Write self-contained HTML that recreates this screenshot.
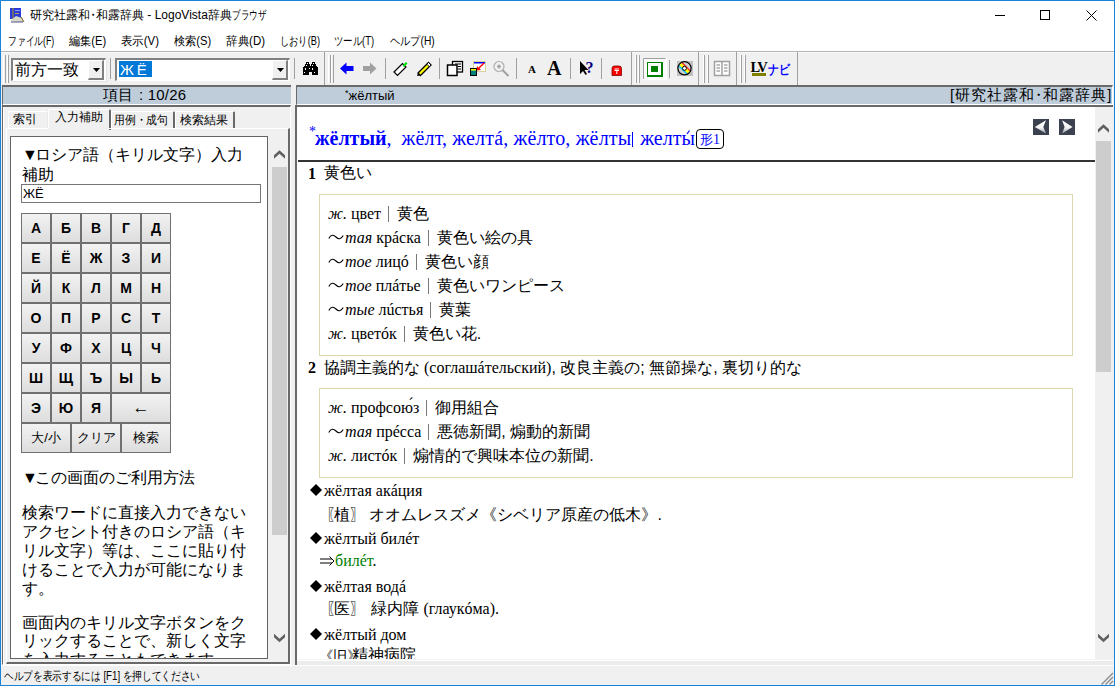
<!DOCTYPE html>
<html><head><meta charset="utf-8">
<style>
*{margin:0;padding:0;box-sizing:border-box}
html,body{width:1115px;height:686px;overflow:hidden;background:#f0f0f0;font-family:"Liberation Sans",sans-serif;color:#000}
.a{position:absolute}
.t{position:absolute;white-space:nowrap;line-height:1}
#rc i{font-style:italic}
#rc j{font-family:"Liberation Sans",sans-serif;font-size:16px}
.bx{border:1px solid #dcd8b0}
.ln div{height:24px;line-height:24px;white-space:nowrap}
.sp{display:inline-block;width:1px;height:16px;background:#787878;vertical-align:-3px;margin:0 8px 0 7px;text-decoration:none}
.k{position:absolute;height:30px;border:1px solid #707070;background:linear-gradient(#f2f2f2,#dddddd);font-size:14px;font-weight:bold;text-align:center;line-height:28px;color:#000}
</style></head><body>
<!-- window border -->
<div class="a" style="left:0;top:0;width:1115px;height:686px;border:1px solid #1883d7;z-index:50;pointer-events:none"></div>
<!-- title bar -->
<div class="a" style="left:0;top:0;width:1115px;height:52px;background:#fff"></div>
<div class="a" style="left:0;top:51px;width:1115px;height:1px;background:#b4b4b4"></div><div class="a" style="left:0;top:52px;width:1115px;height:1px;background:#fafafa"></div>
<div class="t" style="left:30px;top:9px;font-size:12px">研究社露和<span style="margin:0 -3px">・</span>和露辞典 - LogoVista辞典<span style="display:inline-block;transform:scaleX(0.72);transform-origin:0 0;margin-right:-13.4px">ブラウザ</span></div>
<svg class="a" style="left:9px;top:7px" width="16" height="16">
<rect x="1" y="1" width="11" height="11" fill="#2a3ad8"/><rect x="3" y="1" width="2" height="11" fill="#6a6a7a"/><rect x="6" y="3" width="5" height="1" fill="#8aa0ff"/><rect x="6" y="6" width="4" height="1" fill="#c0a040"/>
<path d="M1 14L7 9L13 11L15 15L9 15Z" fill="#d8d8c8"/><path d="M2 15H14" stroke="#505080" stroke-width="1"/><path d="M12 10L15 15" stroke="#806020" stroke-width="1"/>
</svg>
<!-- window controls -->
<div class="a" style="left:995px;top:15px;width:10px;height:1px;background:#000"></div>
<div class="a" style="left:1040px;top:10px;width:10px;height:10px;border:1px solid #000"></div>
<svg class="a" style="left:1086px;top:10px" width="11" height="11" viewBox="0 0 11 11"><path d="M0.5 0.5L10.5 10.5M10.5 0.5L0.5 10.5" stroke="#000" stroke-width="1"/></svg>
<!-- menu -->
<div class="t" style="left:8px;top:35px;font-size:12px;transform:scaleX(0.73);transform-origin:0 0">ファイル(F)</div>
<div class="t" style="left:69px;top:35px;font-size:12px;transform:scaleX(0.93);transform-origin:0 0">編集(E)</div>
<div class="t" style="left:121px;top:35px;font-size:12px;transform:scaleX(0.95);transform-origin:0 0">表示(V)</div>
<div class="t" style="left:174px;top:35px;font-size:12px;transform:scaleX(0.93);transform-origin:0 0">検索(S)</div>
<div class="t" style="left:226px;top:35px;font-size:12px;transform:scaleX(0.96);transform-origin:0 0">辞典(D)</div>
<div class="t" style="left:280px;top:35px;font-size:12px;transform:scaleX(0.77);transform-origin:0 0">しおり(B)</div>
<div class="t" style="left:334px;top:35px;font-size:12px;transform:scaleX(0.78);transform-origin:0 0">ツール(T)</div>
<div class="t" style="left:390px;top:35px;font-size:12px;transform:scaleX(0.85);transform-origin:0 0">ヘルプ(H)</div>


<!-- toolbar -->
<div class="a" style="left:3px;top:55px;width:6px;height:28px;border-left:1px solid #fff;border-right:1px solid #a0a0a0"></div>
<div class="a" style="left:5px;top:55px;width:3px;height:28px;border-left:1px solid #a0a0a0;border-right:1px solid #fff"></div>
<div class="a" style="left:11px;top:58px;width:95px;height:23px;background:#fff;border-top:2px solid #808080;border-left:2px solid #808080;border-right:1px solid #fff;border-bottom:1px solid #fff;box-shadow:1px 1px 0 #e3e3e3"></div>
<div class="t" style="left:15px;top:62px;font-size:16px">前方一致</div>
<div class="a" style="left:88px;top:60px;width:16px;height:20px;background:#f0f0f0;border-top:1px solid #fff;border-left:1px solid #fff;border-right:2px solid #808080;border-bottom:2px solid #808080"></div>
<svg class="a" style="left:93px;top:68px" width="7" height="4"><path d="M0 0H7L3.5 4Z" fill="#000"/></svg>
<div class="a" style="left:110px;top:58px;width:1px;height:21px;background:#a0a0a0"></div>
<div class="a" style="left:115px;top:58px;width:175px;height:23px;background:#fff;border-top:2px solid #808080;border-left:2px solid #808080;border-right:1px solid #fff;border-bottom:1px solid #fff"></div>
<div class="a" style="left:119px;top:61px;width:33px;height:16px;background:#0078d7"></div>
<div class="t" style="left:120px;top:62px;font-size:15px;color:#fff;letter-spacing:3px">ЖЁ</div>
<div class="a" style="left:272px;top:60px;width:16px;height:20px;background:#f0f0f0;border-top:1px solid #fff;border-left:1px solid #fff;border-right:2px solid #808080;border-bottom:2px solid #808080"></div>
<svg class="a" style="left:277px;top:68px" width="7" height="4"><path d="M0 0H7L3.5 4Z" fill="#000"/></svg>
<div class="a" style="left:294px;top:58px;width:1px;height:21px;background:#a0a0a0"></div>


<svg class="a" style="left:0;top:0" width="1115" height="90" shape-rendering="crispEdges">
<!-- binoculars -->
<g fill="#000">
<rect x="306" y="62" width="3" height="3"/><rect x="312" y="62" width="3" height="3"/>
<rect x="305" y="64" width="5" height="3"/><rect x="311" y="64" width="5" height="3"/>
<rect x="304" y="66" width="13" height="3"/><rect x="303" y="67" width="15" height="5"/>
<rect x="303" y="71" width="6" height="4"/><rect x="312" y="71" width="6" height="4"/>
</g>
<g fill="#fff"><rect x="307" y="63" width="1" height="1"/><rect x="313" y="63" width="1" height="1"/><rect x="306" y="65" width="1" height="1"/><rect x="312" y="65" width="1" height="1"/><rect x="305" y="68" width="1" height="2"/><rect x="309" y="68" width="1" height="1"/><rect x="312" y="68" width="1" height="2"/><rect x="304" y="72" width="1" height="1"/><rect x="314" y="72" width="1" height="1"/></g>
<!-- rebar divider + grip -->
<rect x="324" y="52" width="1" height="33" fill="#a0a0a0"/>
<rect x="328" y="55" width="1" height="28" fill="#fff"/><rect x="330" y="55" width="1" height="28" fill="#a0a0a0"/>
<rect x="331" y="55" width="1" height="28" fill="#fff"/><rect x="333" y="55" width="1" height="28" fill="#a0a0a0"/>
</g>
</svg>
<svg class="a" style="left:0;top:0" width="1115" height="90">
<!-- blue back arrow -->
<path d="M340 68.5L346.5 62.5V66H353.5V71H346.5V74.5Z" fill="#0000ff"/>
<!-- gray fwd arrow -->
<path d="M376.5 68.5L370 62.5V66H363V71H370V74.5Z" fill="#a0a0a0"/>
<rect x="385" y="58" width="1" height="21" fill="#a0a0a0"/>
<!-- highlighter -->
<path d="M394 72L402.5 63.5L406 67L397.5 75.5Z" fill="#fff" stroke="#000" stroke-width="1.2"/>
<path d="M402.5 65.5L406 62L407.5 63.5L404 67Z" fill="#00e000"/>
<!-- pencil -->
<path d="M418 73L428.5 62.5L431 65L420.5 75.5Z" fill="#ffff00" stroke="#000" stroke-width="1.3"/>
<path d="M426.8 64.2L428.5 62.5L431 65L429.3 66.7Z" fill="#fff" stroke="#000" stroke-width="1"/>
<path d="M417 76L418 73L420.5 75.5Z" fill="#000"/>
<rect x="439" y="58" width="1" height="21" fill="#a0a0a0"/>
<!-- copy -->
<rect x="452.5" y="61.5" width="10" height="10.5" fill="#fff" stroke="#000" stroke-width="1.3"/>
<rect x="447.5" y="65" width="9.5" height="10.5" fill="#fff" stroke="#000" stroke-width="1.5"/>
<path d="M456 64H461M458 66.5H461M458 69H461M455 64H456" stroke="#000" stroke-width="1.2"/>
<!-- export -->
<rect x="473.5" y="61.5" width="12" height="10" fill="#fff" stroke="#d8d0a0" stroke-width="1"/>
<rect x="474" y="62" width="11" height="1.5" fill="#0000ff"/>
<path d="M484 63L478 69" stroke="#ff0000" stroke-width="1.5"/><path d="M476.5 70.5L477 66L481 70Z" fill="#ff0000"/>
<rect x="470.5" y="68.5" width="6" height="7" fill="#008080" stroke="#000" stroke-width="1"/>
<rect x="471" y="69" width="5" height="1.5" fill="#ffff00"/>
<!-- zoom disabled -->
<circle cx="499" cy="66.5" r="5" fill="none" stroke="#b0b0b0" stroke-width="1.2"/>
<path d="M497 66.5H501M499 64.5V68.5" stroke="#a0a0a0" stroke-width="1.6"/>
<path d="M502.5 70L508.5 76" stroke="#a0a0a0" stroke-width="2"/>
<rect x="516" y="58" width="1" height="21" fill="#a0a0a0"/>
<!-- font A -->
<text x="528" y="73" font-family="Liberation Serif" font-weight="bold" font-size="11">A</text>
<text x="547" y="75" font-family="Liberation Serif" font-weight="bold" font-size="20">A</text>
<rect x="570" y="58" width="1" height="21" fill="#a0a0a0"/>
<!-- cursor ? -->
<path d="M580 61V74L583 71L585.5 75L587 74L584.5 70H588.5Z" fill="#000"/>
<text x="585.5" y="73" font-family="Liberation Serif" font-weight="bold" font-size="16" fill="#000080">?</text>
<rect x="601" y="58" width="1" height="21" fill="#a0a0a0"/>
<!-- red post -->
<path d="M612 75.5V68.5Q612 66 614.5 66H619Q621.5 66 621.5 68.5V75.5Z" fill="#ff0000" stroke="#800000" stroke-width="0.8"/>
<path d="M614.5 69H619M614.5 70.5H619M616.8 70.5V74" stroke="#fff" stroke-width="1"/>
<!-- dividers/grips -->
<rect x="631" y="52" width="1" height="33" fill="#a0a0a0"/>
<rect x="635" y="55" width="1" height="28" fill="#fff"/><rect x="636" y="55" width="1" height="28" fill="#a0a0a0"/><rect x="638" y="55" width="1" height="28" fill="#fff"/><rect x="639" y="55" width="1" height="28" fill="#a0a0a0"/>
<!-- pressed button -->
<rect x="643" y="58" width="23" height="22" fill="#fafafa"/>
<path d="M643.5 79.5V58.5H665.5" stroke="#a0a0a0" stroke-width="1" fill="none"/>
<path d="M643 79.5H666.5V58" stroke="#fff" stroke-width="1" fill="none"/>
<rect x="647" y="62" width="16" height="15" fill="#008000"/>
<path d="M648 63H661V75H648Z M651 66V72H658V66Z" fill="#fff" fill-rule="evenodd" shape-rendering="crispEdges"/>
<rect x="669" y="60" width="1" height="18" fill="#a0a0a0"/>
<!-- CD -->
<rect x="677" y="61" width="16" height="15" fill="#c0c0c0"/>
<defs><clipPath id="cdc"><circle cx="684.5" cy="68.3" r="6.3"/></clipPath></defs>
<circle cx="684.5" cy="68.3" r="6.6" fill="#d0d0d0"/>
<g clip-path="url(#cdc)">
<path d="M677 60.8L692 75.8" stroke="#ffff00" stroke-width="3.2"/>
<path d="M679 59.6L694 74.6" stroke="#ff2020" stroke-width="1.3"/>
<path d="M675.8 62.8L690.8 77.8" stroke="#00c8ff" stroke-width="1.3"/>
</g>
<circle cx="684.5" cy="68.3" r="6.6" fill="none" stroke="#000" stroke-width="1.2"/>
<circle cx="684.5" cy="68.3" r="2" fill="#fff" stroke="#000" stroke-width="1"/>
<rect x="698" y="52" width="1" height="33" fill="#a0a0a0"/>
<rect x="703" y="55" width="1" height="28" fill="#fff"/><rect x="704" y="55" width="1" height="28" fill="#a0a0a0"/><rect x="707" y="55" width="1" height="28" fill="#fff"/><rect x="708" y="55" width="1" height="28" fill="#a0a0a0"/>
<!-- book disabled -->
<rect x="714.5" y="61.5" width="15" height="14" fill="#fff" stroke="#a0a0a0" stroke-width="1.5"/>
<path d="M722 62V75" stroke="#a0a0a0" stroke-width="1.5"/>
<path d="M716.5 65H720M716.5 68H720M716.5 71H720M724 65H727.5M724 68H727.5M724 71H727.5" stroke="#a8a8a8" stroke-width="1.5"/>
<rect x="736" y="52" width="1" height="33" fill="#a0a0a0"/>
<rect x="740" y="55" width="1" height="28" fill="#fff"/><rect x="741" y="55" width="1" height="28" fill="#a0a0a0"/><rect x="744" y="55" width="1" height="28" fill="#fff"/><rect x="745" y="55" width="1" height="28" fill="#a0a0a0"/>
<!-- LV navi -->
<text x="750.5" y="71.7" font-family="Liberation Serif" font-weight="bold" font-size="14.5" letter-spacing="-1.5">LV</text>
<rect x="752" y="73" width="14" height="3" fill="#808000"/>
<text x="768" y="74.2" font-family="Liberation Sans" font-weight="bold" font-size="12.5" fill="#0000ff" textLength="22" lengthAdjust="spacingAndGlyphs">ナビ</text>
<rect x="797" y="52" width="1" height="33" fill="#a0a0a0"/>
</svg>

<!-- header bars -->
<div class="a" style="left:2px;top:85px;width:289px;height:21px;background:#bfcddb;border-top:2px solid #6a6a6a;border-left:1px solid #6a6a6a;border-bottom:2px solid #fff"></div>
<div class="t" style="left:103px;top:87px;font-size:15px">項目</div><div class="t" style="left:139px;top:87px;font-size:15px;letter-spacing:0.2px">:&nbsp;10/26</div>
<div class="a" style="left:296px;top:85px;width:817px;height:21px;background:#bfcddb;border-top:2px solid #6a6a6a;border-left:1px solid #6a6a6a;border-bottom:2px solid #fff;border-right:1px solid #fff"></div>
<div class="t" style="left:345px;top:89px;font-size:13px"><span style="font-size:9px;vertical-align:4px">*</span>жёлтый</div>
<div class="t" style="left:950px;top:87px;font-size:15px;letter-spacing:1px">[研究社露和<span style="margin:0 -4px">・</span>和露辞典]</div>

<!-- right pane -->
<div class="a" style="left:295px;top:105px;width:818px;height:560px;background:#f0f0f0;border-top:2px solid #696969;border-left:2px solid #696969"></div>
<div class="a" style="left:297px;top:107px;width:798px;height:552px;background:#fff"></div>

<!-- right content -->
<div class="a" id="rc" style="left:297px;top:107px;width:798px;height:552px;overflow:hidden;font-family:'Liberation Serif',serif;font-size:16px">
 <div class="t" style="left:12px;top:18px;font-size:14px;color:#0000ff">*</div>
 <div class="t" style="left:18px;top:21px;font-size:20px;color:#0000ff"><b>жёлтый</b>,&nbsp; <span style="letter-spacing:0.15px">жёлт, желтá, жёлто, жёлты</span><span style="display:inline-block;width:1px;height:15px;background:#0000ff;vertical-align:-2px;margin:0 2px 0 1px"></span> желты</div>
 <svg class="a" style="left:389px;top:23px" width="5" height="5"><path d="M1 4L3.5 0.5" stroke="#0000ff" stroke-width="1.2"/></svg>
 <div class="a" style="left:399px;top:22px;width:28px;height:20px;border:1.5px solid #000;border-radius:4px"></div>
 <div class="t" style="left:403px;top:26px;font-size:14px;color:#0000ff"><span style="font-family:'Liberation Sans',sans-serif;font-size:13px">形</span>1</div>
 <svg class="a" style="left:736px;top:12px" width="42" height="16"><defs><linearGradient id="ng" x1="0" y1="0" x2="0" y2="1"><stop offset="0" stop-color="#fff"/><stop offset="0.55" stop-color="#f4f4f4"/><stop offset="1" stop-color="#9098a8"/></linearGradient></defs><rect width="16" height="16" fill="#3c4150"/><path d="M1.8 8L13 1.2L10.3 8L13 14.6Z" fill="url(#ng)"/><rect x="26" width="16" height="16" fill="#3c4150"/><path d="M39.6 8L29.1 1.2L31.6 8L29.1 14.6Z" fill="url(#ng)"/></svg>
 <div class="a" style="left:1px;top:53px;width:797px;height:2px;background:#333"></div>
 <div class="t" style="left:11px;top:59px;font-weight:bold">1</div>
 <div class="t" style="left:27px;top:58px;font-family:'Liberation Sans',sans-serif">黄色い</div>
 <div class="a bx" style="left:22px;top:87px;width:754px;height:162px"></div>
 <div class="a ln" style="left:31px;top:95px">
  <div><i>ж.</i> цвет<s class="sp"></s><j>黄色</j></div>
  <div><svg width="16" height="10" style="vertical-align:1px;margin-right:1px"><path d="M0.8 6.5C3 2.5 5.5 2.5 8 5S13 7.5 15.2 3.5" stroke="#000" stroke-width="1.1" fill="none"/></svg><i>тая</i> крáска<s class="sp"></s><j>黄色い絵の具</j></div>
  <div><svg width="16" height="10" style="vertical-align:1px;margin-right:1px"><path d="M0.8 6.5C3 2.5 5.5 2.5 8 5S13 7.5 15.2 3.5" stroke="#000" stroke-width="1.1" fill="none"/></svg><i>тое</i> лицó<s class="sp"></s><j>黄色い顔</j></div>
  <div><svg width="16" height="10" style="vertical-align:1px;margin-right:1px"><path d="M0.8 6.5C3 2.5 5.5 2.5 8 5S13 7.5 15.2 3.5" stroke="#000" stroke-width="1.1" fill="none"/></svg><i>тое</i> плáтье<s class="sp"></s><j>黄色いワンピース</j></div>
  <div><svg width="16" height="10" style="vertical-align:1px;margin-right:1px"><path d="M0.8 6.5C3 2.5 5.5 2.5 8 5S13 7.5 15.2 3.5" stroke="#000" stroke-width="1.1" fill="none"/></svg><i>тые</i> лúстья<s class="sp"></s><j>黄葉</j></div>
  <div><i>ж.</i> цветóк<s class="sp"></s><j>黄色い花.</j></div>
 </div>
 <div class="t" style="left:11px;top:253px;font-weight:bold">2</div>
 <div class="t" style="left:27px;top:253px"><j>協調主義的な</j> (соглашáтельский)<j>, 改良主義の; 無節操な, 裏切り的な</j></div>
 <div class="a bx" style="left:22px;top:281px;width:754px;height:90px"></div>
 <div class="a ln" style="left:31px;top:289px">
  <div><i>ж.</i> профсою́з<s class="sp"></s><j>御用組合</j></div>
  <div><svg width="16" height="10" style="vertical-align:1px;margin-right:1px"><path d="M0.8 6.5C3 2.5 5.5 2.5 8 5S13 7.5 15.2 3.5" stroke="#000" stroke-width="1.1" fill="none"/></svg><i>тая</i> прéсса<s class="sp"></s><j>悪徳新聞, 煽動的新聞</j></div>
  <div><i>ж.</i> листóк<s class="sp"></s><j>煽情的で興味本位の新聞.</j></div>
 </div>
 <svg class="a" style="left:13px;top:377px" width="12" height="12"><path d="M6 0L12 6L6 12L0 6Z" fill="#000"/></svg><div class="t" style="left:27px;top:376px">жёлтая акáция</div>
 <div class="t" style="left:29px;top:400px"><j><span style="margin-right:-8px">〖</span>植<span style="margin-right:-1px">〗</span> オオムレスズメ《シベリア原産の低木》.</j></div>
 <svg class="a" style="left:13px;top:425px" width="12" height="12"><path d="M6 0L12 6L6 12L0 6Z" fill="#000"/></svg><div class="t" style="left:27px;top:424px">жёлтый билéт</div>
 <div class="t" style="left:23px;top:446px"><svg width="15" height="10" style="vertical-align:0px;margin-right:0px"><path d="M0 3H12M0 7H12M9.5 0.5L14 5L9.5 9.5" stroke="#000" stroke-width="1" fill="none"/></svg><span style="color:#008000">билéт</span>.</div>
 <svg class="a" style="left:13px;top:473px" width="12" height="12"><path d="M6 0L12 6L6 12L0 6Z" fill="#000"/></svg><div class="t" style="left:27px;top:472px">жёлтая водá</div>
 <div class="t" style="left:29px;top:494px"><j><span style="margin-right:-8px">〖</span>医<span style="margin-right:1px">〗</span> 緑内障</j> (глаукóма).</div>
 <svg class="a" style="left:13px;top:521px" width="12" height="12"><path d="M6 0L12 6L6 12L0 6Z" fill="#000"/></svg><div class="t" style="left:27px;top:520px">жёлтый дом</div>
 <div class="t" style="left:22px;top:540px"><j><span style="font-size:13px;letter-spacing:-0.5px;display:inline-block;width:33px;transform:scaleX(1.1);transform-origin:0 0">《旧》</span>精神病院</j></div>
</div>
<!-- right scrollbar -->
<div class="a" style="left:1095px;top:107px;width:17px;height:552px;background:#f0f0f0"></div>
<div class="a" style="left:1096px;top:141px;width:15px;height:231px;background:#cdcdcd"></div>
<svg class="a" style="left:1097px;top:123.5px" width="13" height="10"><path d="M1 5.2L6.5 0.3L12 5.2V8.7L6.5 3.8L1 8.7Z" fill="#606060"/></svg>
<svg class="a" style="left:1097px;top:632.5px" width="13" height="10"><path d="M1 0.8L6.5 5.7L12 0.8V4.3L6.5 9.2L1 4.3Z" fill="#606060"/></svg>

<!-- left pane -->
<div class="a" style="left:2px;top:105px;width:289px;height:560px;background:#f0f0f0;border-top:2px solid #696969;border-left:1px solid #696969;border-right:1px solid #fff;border-bottom:1px solid #fff"></div>
<div class="a" style="left:3px;top:107px;width:1px;height:557px;background:#fff"></div>
<!-- tabs -->
<div class="a" style="left:8px;top:111px;width:40px;height:18px;border-top:1px solid #fff;border-left:1px solid #fff;border-right:1px solid #e8e8e8;border-radius:2px 2px 0 0"></div>
<div class="t" style="left:13px;top:113px;font-size:12px">索引</div>
<div class="a" style="left:48px;top:109px;width:63px;height:21px;background:#f0f0f0;border-top:1px solid #fff;border-left:1px solid #fff;border-right:2px solid #696969;border-radius:2px 2px 0 0"></div>
<div class="t" style="left:55px;top:111px;font-size:12px">入力補助</div>
<div class="a" style="left:111px;top:111px;width:64px;height:18px;border-top:1px solid #fff;border-left:1px solid #fff;border-right:2px solid #696969;border-radius:2px 2px 0 0"></div>
<div class="t" style="left:114px;top:114px;font-size:12px;transform:scaleX(0.9);transform-origin:0 0">用例・成句</div>
<div class="a" style="left:175px;top:111px;width:60px;height:18px;border-top:1px solid #fff;border-left:1px solid #fff;border-right:2px solid #696969;border-radius:2px 2px 0 0"></div>
<div class="t" style="left:180px;top:114px;font-size:12px">検索結果</div>
<!-- tab panel -->
<div class="a" style="left:6px;top:128px;width:284px;height:536px;border-top:1px solid #fff;border-left:1px solid #fff;border-right:2px solid #696969;border-bottom:2px solid #696969"></div>
<div class="a" style="left:48px;top:128px;width:61px;height:2px;background:#f0f0f0"></div>
<!-- content box -->
<div class="a" style="left:10px;top:136px;width:258px;height:523px;background:#fff;border:1px solid #646464;overflow:hidden">
 <div class="t" style="left:11px;top:10px;font-size:16px"><span style="margin-right:-3px">▼</span>ロシア語（キリル文字）入力</div>
 <div class="t" style="left:11px;top:30px;font-size:16px">補助</div>
 <div class="a" style="left:10px;top:47px;width:240px;height:19px;border:1px solid #767676;background:#fff"></div>
 <div class="t" style="left:12px;top:50px;font-size:13px">ЖЁ</div>
 <div id="kb" class="a" style="left:10px;top:76px"><div class="k" style="left:0px;top:0px;width:30px">А</div><div class="k" style="left:30px;top:0px;width:30px">Б</div><div class="k" style="left:60px;top:0px;width:30px">В</div><div class="k" style="left:90px;top:0px;width:30px">Г</div><div class="k" style="left:120px;top:0px;width:30px">Д</div><div class="k" style="left:0px;top:30px;width:30px">Е</div><div class="k" style="left:30px;top:30px;width:30px">Ё</div><div class="k" style="left:60px;top:30px;width:30px">Ж</div><div class="k" style="left:90px;top:30px;width:30px">З</div><div class="k" style="left:120px;top:30px;width:30px">И</div><div class="k" style="left:0px;top:60px;width:30px">Й</div><div class="k" style="left:30px;top:60px;width:30px">К</div><div class="k" style="left:60px;top:60px;width:30px">Л</div><div class="k" style="left:90px;top:60px;width:30px">М</div><div class="k" style="left:120px;top:60px;width:30px">Н</div><div class="k" style="left:0px;top:90px;width:30px">О</div><div class="k" style="left:30px;top:90px;width:30px">П</div><div class="k" style="left:60px;top:90px;width:30px">Р</div><div class="k" style="left:90px;top:90px;width:30px">С</div><div class="k" style="left:120px;top:90px;width:30px">Т</div><div class="k" style="left:0px;top:120px;width:30px">У</div><div class="k" style="left:30px;top:120px;width:30px">Ф</div><div class="k" style="left:60px;top:120px;width:30px">Х</div><div class="k" style="left:90px;top:120px;width:30px">Ц</div><div class="k" style="left:120px;top:120px;width:30px">Ч</div><div class="k" style="left:0px;top:150px;width:30px">Ш</div><div class="k" style="left:30px;top:150px;width:30px">Щ</div><div class="k" style="left:60px;top:150px;width:30px">Ъ</div><div class="k" style="left:90px;top:150px;width:30px">Ы</div><div class="k" style="left:120px;top:150px;width:30px">Ь</div><div class="k" style="left:0px;top:180px;width:30px">Э</div><div class="k" style="left:30px;top:180px;width:30px">Ю</div><div class="k" style="left:60px;top:180px;width:30px">Я</div><div class="k" style="left:90px;top:180px;width:60px;font-weight:normal;font-size:17px">←</div><div class="k" style="left:0px;top:210px;width:50px;font-weight:normal;font-size:13px">大/小</div><div class="k" style="left:50px;top:210px;width:50px;font-weight:normal;font-size:13px">クリア</div><div class="k" style="left:100px;top:210px;width:50px;font-weight:normal;font-size:13px">検索</div></div>
 <div class="t" style="left:11px;top:333px;font-size:16px"><span style="margin-right:-3px">▼</span>この画面のご利用方法</div>
 <div class="a" style="left:11px;top:366px;font-size:16px;line-height:19px;width:232px;word-break:break-all">検索ワードに直接入力できない<br>アクセント付きのロシア語（キ<br>リル文字）等は、ここに貼り付<br>けることで入力が可能になりま<br>す。</div>
 <div class="a" style="left:11px;top:476.5px;font-size:16px;line-height:18.5px;width:232px">画面内のキリル文字ボタンをク<br>リックすることで、新しく文字<br>を入力することもできます。</div>
</div>
<!-- left scrollbar -->
<div class="a" style="left:272px;top:167px;width:15px;height:368px;background:#cdcdcd"></div>
<svg class="a" style="left:273px;top:150px" width="13" height="10"><path d="M1 5.2L6.5 0.3L12 5.2V8.7L6.5 3.8L1 8.7Z" fill="#606060"/></svg>
<svg class="a" style="left:273px;top:632.5px" width="13" height="10"><path d="M1 0.8L6.5 5.7L12 0.8V4.3L6.5 9.2L1 4.3Z" fill="#606060"/></svg>

<!-- bottom strip & grip -->
<div class="a" style="left:297px;top:659px;width:816px;height:6px;background:#ececec;border-top:1px solid #f4f4f4"></div>
<div class="a" style="left:297px;top:660px;width:816px;height:1px;background:#fff"></div>
<div class="a" style="left:0;top:665px;width:1115px;height:1px;background:#fff"></div>
<svg class="a" style="left:1100px;top:672px" width="14" height="13"><path d="M1.5 12.5L13 1M5.5 12.5L13 5M9.5 12.5L13 9" stroke="#8a8a8a" stroke-width="1.3"/></svg>
<!-- status bar -->
<div class="t" style="left:4px;top:670px;font-size:12px;transform:scaleX(0.806);transform-origin:0 0">ヘルプを表示するには [F1] を押してください</div>
</body></html>
